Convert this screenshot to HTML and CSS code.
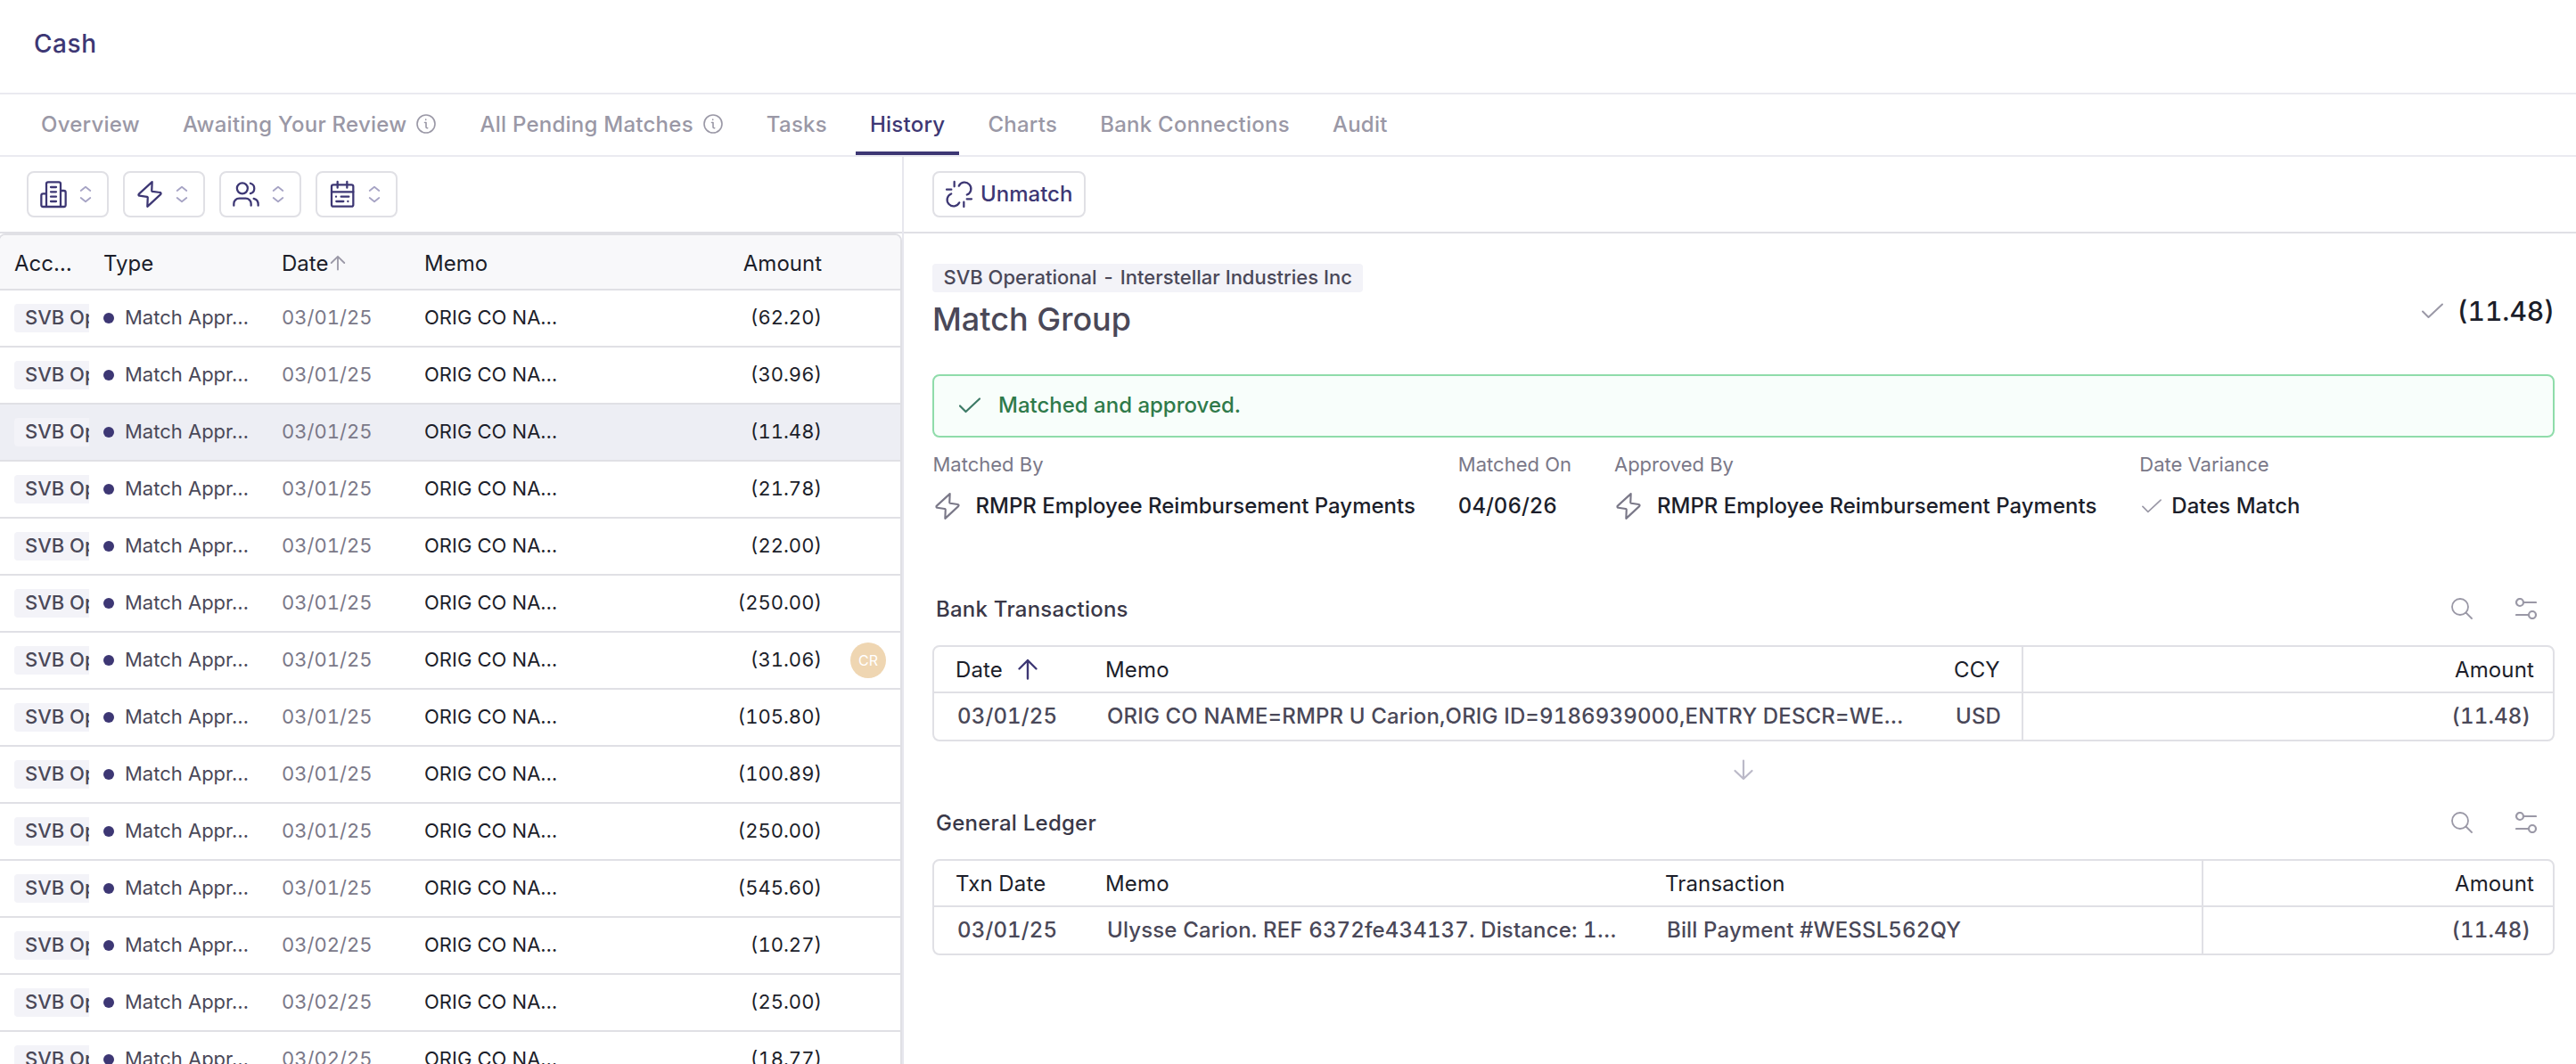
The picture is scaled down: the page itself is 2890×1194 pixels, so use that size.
FILE: index.html
```html
<!DOCTYPE html>
<html lang="en">
<head>
    <meta charset="utf-8">
    <title>Cash</title>
    <link rel="stylesheet" href="styles.css">
</head>
<body>
<svg class="defs">
    <symbol id="bolt" viewBox="0 0 24 24"><path d="M14 1.600 2.900 11.700a.9.9 0 0 0 .5 1.600l6.300.9a.8.8 0 0 1 .6 1l-.3 7.200L21.100 12.100a.9.9 0 0 0-.5-1.600l-6.300-.9a.8.8 0 0 1-.6-1z"/></symbol>
    <symbol id="updown" viewBox="0 0 24 24"><path d="M6.700 8 12 3.700 17.300 8M6.700 16 12 20.300 17.300 16"/></symbol>
    <symbol id="info" viewBox="0 0 24 24"><circle cx="12" cy="12" r="10"/><path d="M10.500 10.500H12v5q0 1.200 1.200 1.200h.5M11.700 7v.4"/></symbol>
    <symbol id="check" viewBox="0 0 24 24"><path d="M1 12.500 7.500 19 23 4.500"/></symbol>
    <symbol id="search" viewBox="0 0 24 24"><circle cx="10" cy="10" r="9"/><path d="m16.500 16.500 6.500 6.500"/></symbol>
    <symbol id="sliders" viewBox="0 0 24 24"><circle cx="5" cy="5" r="4"/><path d="M9 5h14M1 19h14"/><circle cx="19" cy="19" r="4"/></symbol>
</svg>

<header class="topbar"><h1>Cash</h1></header>

<nav class="tabs">
    <a class="tab">Overview</a>
    <a class="tab">Awaiting Your Review <svg class="info"><use href="#info"/></svg></a>
    <a class="tab">All Pending Matches <svg class="info"><use href="#info"/></svg></a>
    <a class="tab">Tasks</a>
    <a class="tab active">History</a>
    <a class="tab">Charts</a>
    <a class="tab">Bank Connections</a>
    <a class="tab">Audit</a>
</nav>

<main class="content">
    <section class="list">
        <div class="toolbar">
            <button class="btn">
                <svg class="icon" viewBox="0 0 24 24"><path d="M6 22.500V3.250A1.500 1.500 0 0 1 7.500 1.750h9a1.500 1.500 0 0 1 1.500 1.500V22.500M6 11.500H3.250a1.500 1.500 0 0 0-1.500 1.500v8a1.500 1.500 0 0 0 1.500 1.500h17.500a1.500 1.500 0 0 0 1.500-1.500V10.500A1.500 1.500 0 0 0 20.750 9H18M9.750 6h4.500M9.750 10h4.500M9.750 14h4.500M9.750 18h4.500"/></svg>
                <svg class="updown"><use href="#updown"/></svg>
            </button>
            <button class="btn">
                <svg class="icon"><use href="#bolt"/></svg>
                <svg class="updown"><use href="#updown"/></svg>
            </button>
            <button class="btn">
                <svg class="icon" viewBox="0 0 24 24"><circle cx="8.900" cy="7" r="4.500"/><path d="M1.750 21.500V20a4.500 4.500 0 0 1 4.500-4.500h5.500a4.500 4.500 0 0 1 4.500 4.500v1.500M15.700 2.800a4.400 4.400 0 0 1 0 8.500M18.500 15.600a5 5 0 0 1 3.750 4.800v1.100"/></svg>
                <svg class="updown"><use href="#updown"/></svg>
            </button>
            <button class="btn">
                <svg class="icon" viewBox="0 0 24 24"><rect x="3" y="4" width="18.250" height="18.250" rx="1.500"/><path d="M3 10h18.250M8 1.500v5M16 1.500v5M6.750 14h.05M11 14h6.500M7 18h6M16.750 18h.05"/></svg>
                <svg class="updown"><use href="#updown"/></svg>
            </button>
        </div>

        <div class="grid">
            <div class="row head">
                <span>Acc…</span><span>Type</span>
                <span class="sort">Date<svg viewBox="0 0 16 16"><path d="M8 15.500V1M.7 8 8 .8 15.300 8"/></svg></span>
                <span>Memo</span><span class="amt">Amount</span><span></span>
            </div>
        </div>
    </section>

    <section class="detail">
        <div class="toolbar">
            <button class="btn">
                <svg class="icon" viewBox="0 0 24 24"><path d="M11.800 5a5.400 5.400 0 1 1 6.800 7.400M12.200 19a5.400 5.400 0 1 1-6.800-7.400M8 1.500v4M1.500 8h4M16 18.500v4M18.500 16h4"/></svg>
                <span>Unmatch</span>
            </button>
        </div>

        <div class="body">
            <div class="heading">
                <div>
                    <div class="pill"><span>SVB Operational</span><span>-</span><span>Interstellar Industries Inc</span></div>
                    <h2>Match Group</h2>
                </div>
                <div class="total"><svg><use href="#check"/></svg><span>(11.48)</span></div>
            </div>

            <div class="banner"><svg><use href="#check"/></svg><span>Matched and approved.</span></div>

            <div class="meta">
                <div>
                    <label>Matched By</label>
                    <p><svg class="icon"><use href="#bolt"/></svg><span>RMPR Employee Reimbursement Payments</span></p>
                </div>
                <div>
                    <label>Matched On</label>
                    <p><span>04/06/26</span></p>
                </div>
                <div>
                    <label>Approved By</label>
                    <p><svg class="icon"><use href="#bolt"/></svg><span>RMPR Employee Reimbursement Payments</span></p>
                </div>
                <div>
                    <label>Date Variance</label>
                    <p><svg class="tick"><use href="#check"/></svg><span>Dates Match</span></p>
                </div>
            </div>

            <div class="section-title">
                <h3>Bank Transactions</h3>
                <svg><use href="#search"/></svg>
                <svg class="sliders"><use href="#sliders"/></svg>
            </div>
            <div class="table bank">
                <div class="tr th">
                    <span>Date<svg class="up" viewBox="0 0 22 22"><path d="M11 21.500V1M1.500 10.500 11 1l9.500 9.500"/></svg></span>
                    <span>Memo</span><span>CCY</span><span class="amt">Amount</span>
                </div>
                <div class="tr">
                    <span>03/01/25</span>
                    <span>ORIG CO NAME=RMPR U Carion,ORIG ID=9186939000,ENTRY DESCR=WE…</span>
                    <span>USD</span><span class="amt">(11.48)</span>
                </div>
            </div>

            <div class="arrow"><svg viewBox="0 0 22 22"><path d="M11 .5V21M1.500 12 11 21l9.500-9"/></svg></div>

            <div class="section-title">
                <h3>General Ledger</h3>
                <svg><use href="#search"/></svg>
                <svg class="sliders"><use href="#sliders"/></svg>
            </div>
            <div class="table ledger">
                <div class="tr th">
                    <span>Txn Date</span><span>Memo</span><span>Transaction</span><span class="amt">Amount</span>
                </div>
                <div class="tr">
                    <span>03/01/25</span>
                    <span>Ulysse Carion. REF 6372fe434137. Distance: 1…</span>
                    <span>Bill Payment #WESSL562QY</span><span class="amt">(11.48)</span>
                </div>
            </div>
        </div>
    </section>
</main>
<script src="script.js"></script>
</body>
</html>
```
FILE: styles.css
```css
* { box-sizing: border-box; }

body {
    margin: 0;
    height: 1194px;
    overflow: hidden;
    display: flex;
    flex-direction: column;
    font-family: Inter, "Liberation Sans", sans-serif;
    font-size: 24px;
    color: #1c1e2a;
    background: #fff;
}

h1, h2, h3, p { margin: 0; font-weight: 500; }
svg { flex: none; fill: none; stroke: currentColor; stroke-linecap: round; stroke-linejoin: round; overflow: visible; }
.defs { display: none; }

.topbar { height: 106px; padding: 31px 38px; border-bottom: 2px solid #eaeaf0; }
.topbar h1 { font-size: 28px; line-height: 36px; letter-spacing: 0.02em; color: #3d3774; }

.tabs { display: flex; gap: 16px; height: 70px; padding: 0 30px; border-bottom: 2px solid #eaeaf0; color: #9a98a6; font-weight: 500; letter-spacing: 0.0105em; }
.tab { display: flex; align-items: center; gap: 10px; padding: 2px 16px 0; border-bottom: 4px solid transparent; white-space: nowrap; }
.tab.active { color: #3d3774; border-color: #3d3774; }
.info { width: 24px; height: 24px; stroke-width: 1.6; }

.content { flex: 1; display: flex; min-height: 0; }
.list { width: 1014px; flex: none; border-right: 2px solid #e7e7ee; overflow: hidden; }
.detail { flex: 1; min-width: 0; }

.toolbar { display: flex; gap: 16px; height: 86px; padding: 16px 30px 0; border-bottom: 2px solid #e0e0e5; }
.detail .toolbar { padding-left: 32px; }
.btn {
    display: flex;
    align-items: center;
    gap: 8px;
    height: 52px;
    padding: 0 12px;
    border: 2px solid #e0e0e5;
    border-radius: 8px;
    background: #fff;
    color: #3d3774;
    font: inherit;
    font-weight: 500;
}
.btn span { padding-bottom: 2px; }
.detail .btn { width: 172px; }
.icon { width: 32px; height: 32px; stroke-width: 1.7; }
.updown { width: 24px; height: 24px; stroke-width: 1.8; color: #a6a3c4; }

.grid { margin-left: -2px; border: 2px solid #e0e0e5; border-radius: 8px 8px 0 0; overflow: hidden; }
.row { display: grid; grid-template-columns: 100px 200px 160px 180px 298px 72px; height: 64px; align-items: center; border-bottom: 2px solid #e0e0e5; font-size: 22px; white-space: nowrap; }
.row > span { padding-left: 16px; padding-bottom: 2px; overflow: hidden; }
.row > .acct, .row > .who { padding-bottom: 0; }
.row.head { height: 62px; font-size: 24px; background: #f8f8fa; }
.row.head > span { padding-top: 2px; padding-bottom: 0; }
.row.selected { background: #edeef4; }
.row .amt { padding-right: 16px; }
.amt { text-align: right; font-variant-numeric: tabular-nums; }
.sort { display: flex; align-items: center; gap: 3px; }
.sort svg { width: 16px; height: 16px; stroke-width: 1.8; color: #9a98a6; }
.tag { display: block; height: 32px; padding-left: 12px; line-height: 30px; border-radius: 4px 0 0 4px; background: #f3f3f8; color: #4a4858; font-weight: 500; overflow: hidden; }
.type { display: flex; align-items: center; gap: 12px; color: #4a4858; }
.type i { width: 12px; height: 12px; margin-top: 2px; border-radius: 50%; background: #3d3774; }
.date { color: #7a7888; font-variant-numeric: tabular-nums; }
.avatar { display: block; width: 40px; height: 40px; border-radius: 50%; background: #efd6b2; color: #fff; font-size: 16px; font-weight: 400; line-height: 40px; text-align: center; }

.body { padding: 34px 24px 0 32px; }
.heading { display: flex; justify-content: space-between; height: 124px; }
.pill { display: flex; gap: 8px; width: max-content; height: 32px; padding: 0 12.5px; line-height: 30px; border-radius: 4px; background: #f3f3f8; color: #4a4858; font-size: 22px; font-weight: 500; }
h2 { margin-top: 8px; font-size: 36px; line-height: 44px; color: #4a4858; }
.total { display: flex; align-items: center; gap: 15px; height: 106px; font-size: 30px; font-weight: 500; font-variant-numeric: tabular-nums; }
.total svg { width: 26px; height: 24px; stroke-width: 2; color: #9a98a6; }

.banner { display: flex; align-items: center; gap: 20px; height: 71px; padding: 0 28px; border: 2px solid #8fdcaa; border-radius: 8px; background: #f8fefb; color: #2f7a4a; font-weight: 500; }
.banner svg { width: 24px; height: 24px; margin-bottom: 2px; stroke-width: 2.2; color: #3d7a66; }
.banner span { padding-bottom: 2px; }

.meta { display: flex; gap: 48px; height: 168px; padding: 16px 0 0 0.5px; white-space: nowrap; }
.meta label { display: block; font-size: 22px; line-height: 28px; color: #7a7888; }
.meta p { display: flex; align-items: center; height: 32px; margin-top: 17px; }
.meta span { padding-bottom: 2px; font-variant-numeric: tabular-nums; }
.meta .icon { margin-right: 16px; stroke-width: 1.6; color: #7a7888; }
.meta .tick { width: 22px; height: 22px; margin: 0 11px 0 3px; stroke-width: 1.8; color: #9a98a6; }

.section-title { display: flex; align-items: center; height: 65px; padding: 0 20px 17px 4px; }
.section-title h3 { flex: 1; font-size: 24px; letter-spacing: 0.01em; color: #3a3848; }
.section-title svg { width: 24px; height: 24px; stroke-width: 1.8; color: #9a98a6; }
.section-title .sliders { margin-left: 48px; stroke-width: 2.2; }

.table { border: 2px solid #e0e0e5; border-radius: 8px; white-space: nowrap; letter-spacing: 0.006em; }
.tr { display: grid; height: 52px; color: #4a4858; font-weight: 500; font-variant-numeric: tabular-nums; }
.tr.th { border-bottom: 2px solid #e0e0e5; color: #1c1e2a; font-weight: 400; }
.bank .tr { grid-template-columns: 168px 952px 100px 1fr; }
.ledger .tr { grid-template-columns: 168px 628px 626px 1fr; }
.tr > span { display: flex; align-items: center; padding-left: 26px; padding-bottom: 2px; }
.tr.th > span { padding-left: 24px; padding-bottom: 0; }
.tr .amt { justify-content: flex-end; padding-right: 25px; border-left: 2px solid #e0e0e5; }
.tr.th .amt { padding-right: 21px; }
.up { width: 22px; height: 22px; margin-left: 17px; stroke-width: 2.4; color: #3d3774; }

.arrow { display: flex; justify-content: center; height: 67px; padding-top: 21px; color: #bbb9c8; }
.arrow svg { width: 22px; height: 22px; stroke-width: 2.2; }
```
FILE: script.js
```js
var amounts = ["62.20", "30.96", "11.48", "21.78", "22.00", "250.00", "31.06", "105.80", "100.89", "250.00", "545.60", "10.27", "25.00", "18.77"];
var grid = document.querySelector(".grid");

amounts.forEach(function (amount, i) {
    var row = document.createElement("div");
    row.className = "row" + (i === 2 ? " selected" : "");
    row.innerHTML =
        '<span class="acct"><b class="tag">SVB Operational</b></span>' +
        '<span class="type"><i></i>Match Appr…</span>' +
        '<span class="date">' + (i < 11 ? "03/01/25" : "03/02/25") + '</span>' +
        '<span>ORIG CO NA…</span>' +
        '<span class="amt">(' + amount + ')</span>' +
        '<span class="who">' + (i === 6 ? '<b class="avatar">CR</b>' : '') + '</span>';
    grid.appendChild(row);
});
```
